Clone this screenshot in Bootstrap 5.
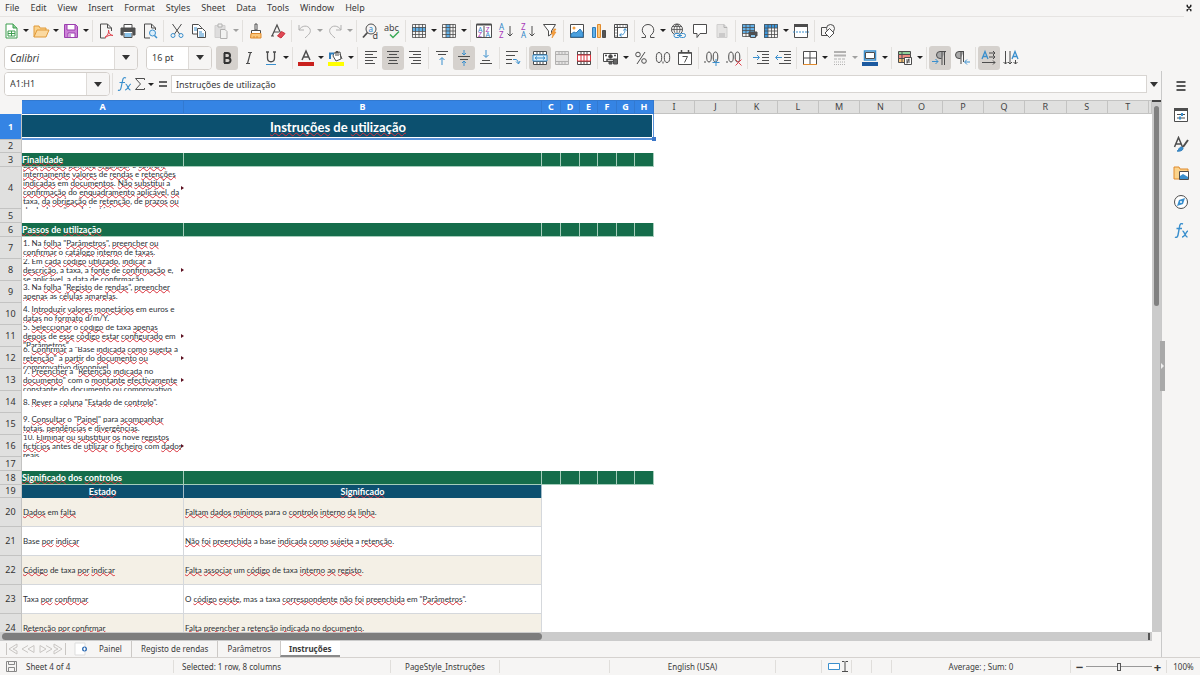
<!DOCTYPE html>
<html lang="pt">
<head>
<meta charset="utf-8">
<meta name="viewport" content="width=device-width, initial-scale=1">
<title>Instruções</title>
<link href="https://cdn.jsdelivr.net/npm/bootstrap@5.3.0/dist/css/bootstrap.min.css" rel="stylesheet">
<style>
:root{--ui:#f6f5f4;--line:#d5d2cf;--ink:#3a3a3a;--sel:#3584e4;--blu:#3a8fcd}
body{background:var(--ui);color:var(--ink);font:9px/14px "Noto Sans","Open Sans",sans-serif;overflow:hidden}
button,input{font:inherit;color:inherit}
svg{display:block;fill:none;stroke:#4d4d4d;stroke-width:1}
a{color:inherit;text-decoration:none}
.menubar{height:17px;border-bottom:1px solid #e6e4e2;margin-right:16px;flex:none}
.menubar a{padding:0 6px 0 5px;line-height:16px}
.closer{top:0;right:6px;width:10px;height:16px}
.tools{height:27px;flex:none}
.tool{width:22px;height:24px;padding:0;border:0;background:none;display:flex;align-items:center;justify-content:center;border-radius:3px;flex:none}
.tool.on{background:#d5d1cd}
.tool svg{width:16px;height:16px;flex:none}
.arrow{width:8px;height:24px;padding:0;border:0;background:none;display:flex;align-items:center;justify-content:center;flex:none}
.arrow::after{content:"";border:3px solid transparent;border-top:3px solid #222;border-bottom:0}
.off{opacity:.4}
.bar{width:1px;height:22px;margin:0 2px;background:#e2e0dd;flex:none}
.combo{height:24px;border:1px solid #d3cfcb;border-radius:4px;background:#fff;overflow:hidden;flex:none}
.combo input{border:0;background:#fff;padding:0 5px;min-width:0;outline:0}
.combo button{width:23px;border:0;border-left:1px solid #dedbd8;background:var(--ui);padding:0;flex:none}
.combo button::after,.drop::after{content:"";display:block;margin:auto;width:8px;border:4px solid transparent;border-top:5px solid #333;border-bottom:0}
.fontbox{width:134px}.sizebox{width:66px}.namebox{width:106px}
.formula{height:29px;flex:none;padding-bottom:3px}
.formula .entry{height:18px;border:1px solid #d8d5d2;background:#fff;padding:0 4px;min-width:0;outline:0}
.drop{width:14px;border:0;background:none;padding:0}
.fx{width:18px}.sum{width:14px}.eq{width:16px}
.sheetwrap{background:#fff;min-height:0}
.grid{table-layout:fixed;width:100%;border-collapse:separate;border-spacing:0;background:#fff;font:8px/9px Lato,"Liberation Sans",sans-serif;color:#2b3036}
.grid th,.grid td{padding:0;overflow:hidden;white-space:nowrap}
.grid thead th{height:14px;background:#e0e0df;border-right:1px solid #c3c3c2;border-bottom:1px solid #c3c3c2;border-top:1px solid #c3c3c2;font:9px/12px "Noto Sans",sans-serif;color:#444;text-align:center}
.grid thead th.hit{background:var(--sel);border-color:#3279d0;color:#fff;font-weight:700}
.grid thead th.corner{background:var(--ui);border-color:var(--ui)}
.grid tbody th{background:#e0e0df;border-right:1px solid #c3c3c2;border-bottom:1px solid #c3c3c2;font:9px/12px "Noto Sans",sans-serif;color:#333;text-align:center}
.grid tbody th.hit{background:var(--sel);color:#fff;font-weight:700}
.grid u{text-decoration:underline wavy #d9303a 1px;text-underline-offset:-1px;text-decoration-skip-ink:none}
.r1 td,.r1 th{height:26px}.r2 th{height:13px}.rs th{height:14px}.rs.cols th{height:13px}.r4 th{height:42px}.rm th{height:22px}.rl th{height:29px}
.grid td.heading{position:relative;overflow:visible;background:#0c506f;color:#fff;text-align:center;font-size:13px;line-height:20px;font-weight:700;box-shadow:inset -1px -2px 0 #5b93da,inset -2px -3px 0 #fff,inset 0 1px 0 #fff}
.heading u{text-underline-offset:0}
.heading i{position:absolute;right:-2px;bottom:-1px;width:4px;height:4px;background:#3a76c8}
.sect td{background:#156d4b;color:#fff;font-weight:700;font-size:9px;border-right:1px solid #a5cdbb;border-bottom:1px solid #a5cdbb;line-height:11px}
.sect td:last-child{background:#fff;border:0}
.cols td{background:#0c506f;color:#fff;font-weight:700;font-size:9px;line-height:11px;text-align:center;border-right:1px solid #a3bcc8}
.cols td:last-child{background:#fff;border:0}
.clip{display:flex;align-items:center;overflow:hidden;height:22px;padding-left:1px}
.clip.tall{height:42px}
.clip>span{flex:1;min-width:0;overflow:hidden}
.clip>b{flex:none;border:2px solid transparent;border-left:3px solid #5c1020;border-right:0}
.rl td{border-right:1px solid #d5d8dc;border-bottom:1px solid #d5d8dc;padding-left:1px}
.rl td:last-child{border:0}
.rl.alt td{background:#f4f0e6}
.rl.alt td:last-child{background:#fff}
.vtrack{width:9px;background:#cbcbcb;padding:4px 2px 0;border-top:2px solid #444}
.vthumb{height:38%;background:#808080;border-radius:3px}
.htrack{height:9px;background:#cbcbcb;padding:1px 2px;margin-right:9px;flex:none}
.hthumb{height:7px;width:47%;background:#7d7d7d;border-radius:4px}
.htrack i{width:2px;background:#555}
.tabs{height:16px;flex:none;font-size:8px}
.tabs a{padding:0 9px;line-height:16px}
.tabs a+a{border-left:1px solid #ccc9c6}
.tabs a.now{background:#fff;font-weight:700;padding:0 8px;border-bottom:2px solid #8a8a8a}
.side{width:39px;border-left:1px solid #c9c9c9}
.side button{width:38px;height:29px;border:0;background:none;padding:0}
.side svg{width:16px;height:16px;margin:auto}
.grip{left:-2px;top:46%;width:5px;height:50px;background:#a9a9a9}
.grip::after{content:"";position:absolute;left:1px;top:22px;border:3px solid transparent;border-left:3px solid #eee;border-right:0}
.status{height:18px;border-top:1px solid var(--line);flex:none;font-size:8px}
.status>div{border-right:1px solid #e0dedb;height:13px;line-height:13px;white-space:nowrap;flex:none}
.status>div:last-child{border:0}
.w22{width:22px}.w152{width:152px}.w217{width:217px}.w92{width:92px}.w110{width:110px}.w166{width:166px}.w46{width:46px}.w30{width:30px}.w33{width:33px}.w20{width:20px}.w179{width:179px}.w96{width:96px}
.status>.grow{flex:1 0 92px}
.zoomer button{border:0;background:none;padding:0;width:12px;font-weight:700;font-size:13px;line-height:12px}
.zoomer input{appearance:none;width:66px;height:10px;background:linear-gradient(#999,#999) center/100% 1px no-repeat}
.zoomer input::-webkit-slider-thumb{appearance:none;width:4px;height:8px;border:1px solid #555;background:#eee}
.t{stroke:none;fill:#444;font-family:"Noto Sans",sans-serif}
.tool svg{overflow:visible}
</style>
</head>
<body class="vh-100 d-flex flex-column">
<nav class="menubar d-flex position-static" aria-label="Menu">
<a href="#">File</a><a href="#">Edit</a><a href="#">View</a><a href="#">Insert</a><a href="#">Format</a><a href="#">Styles</a><a href="#">Sheet</a><a href="#">Data</a><a href="#">Tools</a><a href="#">Window</a><a href="#">Help</a>
<button class="closer position-absolute border-0 bg-transparent p-0" aria-label="Close"><svg width="10" height="16" viewBox="0 0 10 16"><path d="M3 6l4 4M7 6l-4 4M2.500 5.500h1.500M6 5.500h1.500M2.500 10.500H4M6 10.500h1.500" stroke="#222" stroke-width="1.500"/></svg></button>
</nav>

<div class="tools d-flex align-items-center" role="toolbar" aria-label="Standard">
<button class="tool" aria-label="New"><svg viewBox="0 0 16 16"><path d="M3 1h7l4 4v10H3z" fill="#fff" stroke="#3c9d4e"/><path d="M10 1v4h4" fill="#8fd19a" stroke="#3c9d4e"/><path d="M5 8h7v5H5zM5 10.500h7M8.500 8v5" stroke="#3c9d4e"/></svg></button><button class="arrow" aria-label="New options"></button>
<button class="tool" aria-label="Open"><svg viewBox="0 0 16 16"><path d="M1 14V3h5l1 2h6v3" fill="#fbd38c" stroke="#e09a3a"/><path d="M1 14L4 7h12l-3 7z" fill="#fbd9a0" stroke="#e09a3a"/></svg></button><button class="arrow" aria-label="Open options"></button>
<button class="tool" aria-label="Save"><svg viewBox="0 0 16 16"><path d="M1.500 1.500h11l2 2v11h-13z" fill="#cd80d8" stroke="#9b3fae"/><path d="M4 1.500h8V7H4zM5 10h7v4.500H5z" fill="#fff" stroke="#9b3fae"/><path d="M7 11v3" stroke="#9b3fae"/></svg></button><button class="arrow" aria-label="Save options"></button>
<i class="bar"></i>
<button class="tool" aria-label="Export PDF"><svg viewBox="0 0 16 16"><path d="M13.500 8V5l-4-4h-7v14h5M9.500 1v4h4"/><path d="M7 14c3-1 4-5 3.500-7 0 3 2 5.500 4.500 5.500-2-1-6 0-8 2.500" stroke="#e0434f"/></svg></button>
<button class="tool" aria-label="Print"><svg viewBox="0 0 16 16"><path d="M4 5V1.500h8V5" fill="#fff"/><path d="M1 5h14v7H1z" fill="#505050"/><path d="M4 9.500h8v5H4z" fill="#8cc4ea" stroke="#fff"/><path d="M4 10v4.500h8V10"/></svg></button>
<button class="tool" aria-label="Print preview"><svg viewBox="0 0 16 16"><path d="M13.500 7V5l-4-4h-7v14H8M9.500 1v4h4"/><circle cx="10.500" cy="10" r="3" fill="#dceefa" stroke="#3a8fcd"/><path d="M12.500 12.500L15 15" stroke="#3a8fcd" stroke-width="1.500"/></svg></button>
<i class="bar"></i>
<button class="tool" aria-label="Cut"><svg viewBox="0 0 16 16"><path d="M3.500 1l7 10M12.500 1l-7 10"/><circle cx="4" cy="12.500" r="2" stroke="#3a8fcd"/><circle cx="12" cy="12.500" r="2" stroke="#3a8fcd"/></svg></button>
<button class="tool" aria-label="Copy"><svg viewBox="0 0 16 16"><path d="M1.500 1.500h6l3 3V11h-9z" fill="#fff"/><path d="M6.500 5.500h5l3 3v6h-8z" fill="#fff"/><path d="M3 5h3M3 7h3M8 9h3M8 11h5M8 13h5" stroke="#3a8fcd"/></svg></button>
<button class="tool off" aria-label="Paste"><svg viewBox="0 0 16 16"><path d="M2 2.500h10v12H2z" fill="#bbb" stroke="#999"/><path d="M5 1h4v3H5z" fill="#eee"/><path d="M7.500 6.500H12l2 2v7H7.500z" fill="#eee"/></svg></button><button class="arrow off" aria-label="Paste options"></button>
<i class="bar"></i>
<button class="tool" aria-label="Clone formatting"><svg viewBox="0 0 16 16"><path d="M7 1h2v6H7zM3.500 7.500h9v3h-9z" fill="#fff"/><path d="M3 10.500h10v4.500H2.500z" fill="#fbc77c" stroke="#e08a2c"/><path d="M6 13v2M9 13v2" stroke="#e08a2c"/></svg></button>
<button class="tool" aria-label="Clear formatting"><svg viewBox="0 0 16 16"><path d="M2 13L7 2l4 9M4 9h5M1 13h3" stroke-width="1.200"/><path d="M7.500 13l4-4.500 3.500 2-4 4.500z" fill="#e04a56" stroke="#c9303c"/></svg></button>
<i class="bar"></i>
<button class="tool off" aria-label="Undo"><svg viewBox="0 0 16 16"><path d="M2 2v5h5M2 7c3-5 9-5 11-1 1.500 4-2 6-5 9"/></svg></button><button class="arrow off" aria-label="Undo list"></button>
<button class="tool off" aria-label="Redo"><svg viewBox="0 0 16 16"><path d="M14 2v5H9M14 7C11 2 5 2 3 6c-1.500 4 2 6 5 9"/></svg></button><button class="arrow off" aria-label="Redo list"></button>
<i class="bar"></i>
<button class="tool" aria-label="Find and replace"><svg viewBox="0 0 16 16"><circle cx="9" cy="6" r="5"/><path d="M5.500 9.500L1 14.500" stroke-width="1.800"/><text class="t" x="6.500" y="8.500" font-size="8" style="fill:#2f86c8">a</text><text class="t" x="10.500" y="15.500" font-size="9">d</text></svg></button>
<button class="tool" aria-label="Spelling"><svg viewBox="0 0 16 16"><text class="t" x="0" y="7.500" font-size="9">abc</text><path d="M6 11.500l3 3 6-6" stroke="#3cab58" stroke-width="1.500"/></svg></button>
<i class="bar"></i>
<button class="tool" aria-label="Row"><svg viewBox="0 0 16 16"><path d="M1 4h14v4H1z" fill="#63b1e8" stroke="none"/><path d="M1.500 1.500h13v13h-13zM1 4.500h14M1 8.500h14M1 11.500h14M4.500 1v14M8 1v14M11.500 1v14" stroke-width=".8"/></svg></button><button class="arrow" aria-label="Row options"></button>
<button class="tool" aria-label="Column"><svg viewBox="0 0 16 16"><path d="M5 1h4v14H5z" fill="#63b1e8" stroke="none"/><path d="M1.500 1.500h13v13h-13zM1 4.500h14M1 8h14M1 11.500h14M5 1v14M9 1v14M12 1v14" stroke-width=".8"/></svg></button><button class="arrow" aria-label="Column options"></button>
<i class="bar"></i>
<button class="tool" aria-label="Sort"><svg viewBox="0 0 16 16"><path d="M.5 1.500h15v13H.5zM8 3v11" fill="#fff"/><path d="M.5 1.500h15" stroke-width="2"/><g font-size="7"><text class="t" x="2" y="8.500" style="fill:#2f86c8">A</text><text class="t" x="2" y="14" style="fill:#a838b8">Z</text><text class="t" x="9.500" y="8.500" style="fill:#a838b8">Z</text><text class="t" x="9.500" y="14" style="fill:#2f86c8">A</text></g></svg></button>
<button class="tool" aria-label="Sort ascending"><svg viewBox="0 0 16 16"><text class="t" x="1" y="7" font-size="8" style="fill:#2f86c8">A</text><text class="t" x="1" y="15" font-size="8" style="fill:#a838b8">Z</text><path d="M12 3v10M9.500 10.500L12 13l2.500-2.500"/></svg></button>
<button class="tool" aria-label="Sort descending"><svg viewBox="0 0 16 16"><text class="t" x="1" y="7" font-size="8" style="fill:#a838b8">Z</text><text class="t" x="1" y="15" font-size="8" style="fill:#2f86c8">A</text><path d="M12 3v10M9.500 10.500L12 13l2.500-2.500"/></svg></button>
<button class="tool" aria-label="AutoFilter"><svg viewBox="0 0 16 16"><path d="M1.500 1.500h12L9.500 8v3l-3 2V8z" fill="#fff"/><path d="M12 6l-3 5h2l-1 4 4-6h-2l2-3z" fill="#f5a040" stroke="#e78a25" stroke-width=".6"/></svg></button>
<i class="bar"></i>
<button class="tool" aria-label="Image"><svg viewBox="0 0 16 16"><path d="M1.500 1.500h13v13h-13z" fill="#fff"/><circle cx="5" cy="5" r="1.500" fill="#f5a040" stroke="none"/><path d="M2 14v-3l3-2 2 1 4-4 3 4v4z" fill="#4aa0df" stroke="#2f7cba"/></svg></button>
<button class="tool" aria-label="Chart"><svg viewBox="0 0 16 16"><path d="M1.500 4.500h3v10h-3z" fill="#63b1e8" stroke="#2f7cba"/><path d="M6.500 1.500h3v13h-3z" fill="#fbc77c" stroke="#e08a2c"/><path d="M11.500 7.500h3v7h-3z" fill="#555"/></svg></button>
<button class="tool" aria-label="Pivot table"><svg viewBox="0 0 16 16"><path d="M1.500 1.500h13v13h-13zM1 4.500h14M4.500 1v14" fill="#fff"/><path d="M3 3h11M3 6v8" stroke="#999" stroke-dasharray="2 1"/><path d="M7 12c4 0 5-2 5-6M10.500 7.500L12 5.500l1.500 2M8.500 10.500L6.500 12l2 1.500" stroke="#3a8fcd"/></svg></button>
<i class="bar"></i>
<button class="tool" aria-label="Special character"><svg viewBox="0 0 16 16"><path d="M1.500 14.500h4v-2C0 9 2 1.500 8 1.500S16 9 10.500 12.500v2h4"/></svg></button><button class="arrow" aria-label="Recent characters"></button>
<button class="tool" aria-label="Hyperlink"><svg viewBox="0 0 16 16"><circle cx="7" cy="6.500" r="5.500"/><path d="M1.500 6.500h11M2.500 3.500h9M7 1v11M7 1c-4 3-4 8 0 11M7 1c4 3 4 8 0 11" stroke-width=".8"/><rect x="4" y="10.500" width="6" height="4" rx="2" fill="#f6f5f4" stroke="#3a8fcd"/><rect x="9.500" y="10.500" width="6" height="4" rx="2" fill="#f6f5f4" stroke="#3a8fcd"/><path d="M7 12.500h5" stroke="#3a8fcd"/></svg></button>
<button class="tool" aria-label="Comment"><svg viewBox="0 0 16 16"><path d="M1.500 1.500h13v9H8l-3 4v-4H1.500z" fill="#fff"/></svg></button>
<button class="tool off" aria-label="Headers and footers"><svg viewBox="0 0 16 16"><path d="M3 1.500h7l3 3v10H3z" fill="#ccc" stroke="#999"/><path d="M5 11h6M5 13h6M10 1.500v3h3"/></svg></button>
<i class="bar"></i>
<button class="tool" aria-label="Print area"><svg viewBox="0 0 16 16"><path d="M1 1h13v9H1z" fill="#63b1e8" stroke="none"/><path d="M1.500 1.500h12v12h-12zM1 4.500h13M1 7.500h13M1 10.500h13M5 1v13M9 1v13" stroke-width=".8"/><path d="M8 9h8v4H8z" fill="#505050"/><path d="M9.500 11.500h5v3h-5z" fill="#8cc4ea"/></svg></button>
<button class="tool" aria-label="Freeze"><svg viewBox="0 0 16 16"><path d="M1 1h14v4H5v10H1z" fill="#3c97dc" stroke="none"/><path d="M1.500 1.500h13v13h-13zM1 5h14M1 8h14M1 11.500h14M5 1v14M8.500 1v14M11.500 1v14" stroke-width=".8"/></svg></button><button class="arrow" aria-label="Freeze options"></button>
<button class="tool" aria-label="Split window"><svg viewBox="0 0 16 16"><path d="M1.500 1.500h13v13h-13z" fill="#fff"/><path d="M1 2.500h14" stroke-width="3"/><path d="M0 9h16" stroke="#3a8fcd" stroke-dasharray="2 1"/></svg></button>
<i class="bar"></i>
<button class="tool" aria-label="Draw functions"><svg viewBox="0 0 16 16"><path d="M1.500 4.500h8v8h-8z"/><circle cx="10.500" cy="5.500" r="4" fill="#f6f5f4"/><path d="M9.500 5.500l4.500 4.500-4.500 4.500L5 10z" fill="#fff"/></svg></button>
</div>

<div class="tools d-flex align-items-center" role="toolbar" aria-label="Formatting">
<div class="combo fontbox d-flex ms-1"><input class="flex-fill fst-italic" style="font-size:10px" aria-label="Font name" value="Calibri"><button aria-label="Font list"></button></div>
<div class="combo sizebox d-flex ms-2 me-1"><input class="flex-fill" aria-label="Font size" value="16 pt"><button aria-label="Size list"></button></div>
<button class="tool on" aria-label="Bold"><svg viewBox="0 0 16 16"><path d="M5 3h3.500a2.300 2.300 0 010 5H5M5.500 3v10M5 13h4a2.500 2.500 0 000-5H5" stroke="#333" stroke-width="2"/></svg></button>
<button class="tool" aria-label="Italic"><svg viewBox="0 0 16 16"><path d="M7 2.500h4M5 13.500h4M9.500 2.500l-3 11" stroke-width="1.200"/></svg></button>
<button class="tool" aria-label="Underline"><svg viewBox="0 0 16 16"><path d="M3 2h3M10 2h3M4.500 2v6c0 5 7 5 7 0V2" stroke-width="1.300"/><path d="M3 14.500h10" stroke="#3a8fcd"/></svg></button><button class="arrow" aria-label="Underline styles"></button>
<i class="bar"></i>
<button class="tool" aria-label="Font color"><svg viewBox="0 0 16 16"><path d="M4 10l4-9 4 9M5.500 7h5" stroke-width="1.500"/><path d="M0 12h16v4H0z" fill="#c9211e" stroke="none"/></svg></button><button class="arrow" aria-label="Font colors"></button>
<button class="tool" aria-label="Highlighting"><svg viewBox="0 0 16 16"><path d="M6 3l6-1 1 7-5 2-3-5z" fill="#fff"/><path d="M8 6V1.500h2V6M12 4l2 5"/><path d="M2 9V3.500h4" stroke="#2f7cba" stroke-width="2"/><path d="M0 12h16v4H0z" fill="#ff0" stroke="none"/></svg></button><button class="arrow" aria-label="Highlight colors"></button>
<i class="bar"></i>
<button class="tool" aria-label="Align left"><svg viewBox="0 0 16 16"><path d="M2 1.500h12M2 4.500h8M2 7.500h12M2 10.500h8M2 13.500h10"/></svg></button>
<button class="tool on" aria-label="Center"><svg viewBox="0 0 16 16"><path d="M2 1.500h12M4 4.500h8M2 7.500h12M4 10.500h8M3 13.500h10"/></svg></button>
<button class="tool" aria-label="Align right"><svg viewBox="0 0 16 16"><path d="M2 1.500h12M6 4.500h8M2 7.500h12M6 10.500h8M4 13.500h10"/></svg></button>
<i class="bar"></i>
<button class="tool" aria-label="Align top"><svg viewBox="0 0 16 16"><path d="M2 1.500h12M4 4.500h8"/><path d="M8 15V8M5.500 10L8 7.500l2.500 2.500" stroke="#3a8fcd"/></svg></button>
<button class="tool on" aria-label="Center vertically"><svg viewBox="0 0 16 16"><path d="M2 6.500h12M4 9.500h8"/><path d="M8 0v5M6 3l2 2 2-2M8 16v-5M6 13l2-2 2 2" stroke="#3a8fcd"/></svg></button>
<button class="tool" aria-label="Align bottom"><svg viewBox="0 0 16 16"><path d="M4 10.500h8M2 13.500h12"/><path d="M8 0v7M5.500 5L8 7.500 10.500 5" stroke="#3a8fcd"/></svg></button>
<i class="bar"></i>
<button class="tool" aria-label="Wrap text"><svg viewBox="0 0 16 16"><path d="M1 1.500h12M1 5.500h9M1 9.500h6M1 13.500h6"/><path d="M8 9.500h3q2 0 2.500 4M11 11.500l2.500 2.500 1.500-3" stroke="#3a8fcd"/></svg></button>
<i class="bar"></i>
<button class="tool on" aria-label="Merge and center"><svg viewBox="0 0 16 16"><path d="M1.500 1.500h13v13h-13zM1 4.500h14M1 11.500h14M5 1v3.500M8 1v3.500M11 1v3.500M5 11v4M8 11v4M11 11v4" fill="#fff"/><path d="M1 5h14v6H1z" fill="#d9effc" stroke="#3a8fcd"/><path d="M3 8h10M5 6.500L3 8l2 1.500M11 6.500L13 8l-2 1.500" stroke="#3a8fcd"/></svg></button>
<button class="tool off" aria-label="Merge cells"><svg viewBox="0 0 16 16"><path d="M1.500 1.500h13v13h-13zM1 4.500h14M1 11.500h14M5 1v3.500M8 1v3.500M11 1v3.500M5 11v4M8 11v4M11 11v4" fill="#ccc"/></svg></button>
<button class="tool" aria-label="Unmerge cells"><svg viewBox="0 0 16 16"><path d="M1.500 1.500h13v13h-13zM1 4.500h14M1 11.500h14M5 1v3.500M8 1v3.500M11 1v3.500M5 11v4M8 11v4M11 11v4" fill="#fff"/><path d="M1.500 5h13v6h-13zM5 5v6M8 5v6M11 5v6" stroke="#d8343f"/></svg></button>
<i class="bar"></i>
<button class="tool" aria-label="Currency"><svg viewBox="0 0 16 16"><path d="M.5 3.500h14v8H.5z" fill="#fff"/><circle cx="7.500" cy="6.500" r="1.800" fill="#444"/><path d="M4 12V9.500h7V12M2 5.500h2M11 5.500h2" stroke-width="1.500"/><path d="M6 12h3v2H6zM10.500 9h4v5h-4z" fill="#666"/></svg></button><button class="arrow" aria-label="Currency list"></button>
<button class="tool" aria-label="Percent"><svg viewBox="0 0 16 16"><circle cx="5" cy="4.500" r="2.300"/><circle cx="11" cy="11" r="2.300"/><path d="M12 2L4 14"/></svg></button>
<button class="tool" aria-label="Number"><svg viewBox="0 0 16 16"><ellipse cx="4" cy="7.500" rx="2.700" ry="5"/><ellipse cx="12" cy="7.500" rx="2.700" ry="5"/><path d="M8 11.500v2"/></svg></button>
<button class="tool" aria-label="Date"><svg viewBox="0 0 16 16"><path d="M1.500 2.500h13v12h-13z" fill="#fff"/><path d="M1.500 3h13M4.500 0v3M11.500 0v3" stroke-width="1.500"/><path d="M5.500 6.500h5l-3 6"/></svg></button>
<i class="bar"></i>
<button class="tool" aria-label="Add decimal"><svg viewBox="0 0 16 16"><path d="M1 11v2"/><ellipse cx="5" cy="7" rx="2.300" ry="5"/><ellipse cx="11.500" cy="7" rx="2.300" ry="5"/><path d="M12 9v7M8.500 12.500h7" stroke="#3a8fcd"/></svg></button>
<button class="tool" aria-label="Delete decimal"><svg viewBox="0 0 16 16"><path d="M1 11v2"/><ellipse cx="5" cy="7" rx="2.300" ry="5"/><ellipse cx="11.500" cy="7" rx="2.300" ry="5"/><path d="M9.500 9.500l6 6M15.500 9.500l-6 6" stroke="#e0434f"/></svg></button>
<i class="bar"></i>
<button class="tool" aria-label="Increase indent"><svg viewBox="0 0 16 16"><path d="M4 1.500h12M9 4.500h7M9 7.500h7M9 10.500h7M4 13.500h12"/><path d="M0 7.500h6M4 5l2.500 2.500L4 10" stroke="#3a8fcd"/></svg></button>
<button class="tool" aria-label="Decrease indent"><svg viewBox="0 0 16 16"><path d="M4 1.500h12M9 4.500h7M9 7.500h7M9 10.500h7M4 13.500h12"/><path d="M7 7.500H1M3 5L.5 7.500 3 10" stroke="#3a8fcd"/></svg></button>
<i class="bar"></i>
<button class="tool" aria-label="Borders"><svg viewBox="0 0 16 16"><path d="M1.500 1.500h13v13h-13z" fill="#fff"/><path d="M8 1.500v13M1.500 8h13"/><path d="M1 14.500h14" stroke="#e08a2c"/></svg></button><button class="arrow" aria-label="Border list"></button>
<button class="tool off" aria-label="Border style"><svg viewBox="0 0 16 16"><path d="M2 2h12M2 5.500h12" stroke-width="2"/><path d="M2 9h12" stroke-dasharray="3 1"/><path d="M2 12h12M2 14.500h12" stroke-dasharray="1 1"/></svg></button><button class="arrow off" aria-label="Border styles"></button>
<button class="tool" aria-label="Border color"><svg viewBox="0 0 16 16"><path d="M2.500 1h11v9h-11z" fill="#fff" stroke="#3a8fcd" stroke-width="1.500"/><path d="M3.500 2.500h9v6h-9z"/><path d="M0 12h16v4H0z" fill="#1c5aa0" stroke="none"/></svg></button><button class="arrow" aria-label="Border colors"></button>
<i class="bar"></i>
<button class="tool" aria-label="Conditional formatting"><svg viewBox="0 0 16 16"><path d="M1.500 1.500h12v3h-12z" fill="#8fd19a"/><path d="M1.500 4.500h12v4h-12z" fill="#f28b82"/><path d="M1.500 8.500h12v4h-12zM5 1v11" fill="#fbc77c"/><path d="M7.500 7.500h7v7h-7z" fill="#fff"/><path d="M9 10h4M9 12h4M12 8.500l-2 5"/></svg></button><button class="arrow" aria-label="Conditional options"></button>
<i class="bar"></i>
<button class="tool on" aria-label="Left to right"><svg viewBox="0 0 16 16"><path d="M14 1.500H8a3.500 3.500 0 000 7h1.500" fill="#aaa"/><path d="M10 1v14M12.500 1v14"/><path d="M0 11.500h6M3.500 9L6 11.500 3.500 14" stroke="#3a8fcd"/></svg></button>
<button class="tool" aria-label="Right to left"><svg viewBox="0 0 16 16"><path d="M10 1.500H5a3.500 3.500 0 000 7h1.500" fill="#aaa"/><path d="M7 1v13M9.500 1v11"/><path d="M16 12h-5M13 9.500L10.500 12l2.500 2.500" stroke="#3a8fcd"/></svg></button>
<i class="bar"></i>
<button class="tool on" aria-label="Horizontal text"><svg viewBox="0 0 16 16"><path d="M1 9l3-7.500L7 9M2 6.500h4" stroke="#3a8fcd" stroke-width="1.300"/><path d="M8 3h6M8 7h6M1 12.500h13M12 1l2 2-2 2M12 5l2 2-2 2M12 10.500l2 2-2 2"/></svg></button>
<button class="tool" aria-label="Vertical text"><svg viewBox="0 0 16 16"><path d="M9 9l3-7.500L15 9M10 6.500h4" stroke="#3a8fcd" stroke-width="1.300"/><path d="M2.500 1v13M7 1v13M12.500 10v4M.5 12l2 2 2-2M5 12l2 2 2-2M10.500 12l2 2 2-2"/></svg></button>
</div>

<div class="d-flex flex-fill" style="min-height:0">
<main class="d-flex flex-column flex-fill" style="min-width:0">
<div class="formula d-flex align-items-center">
<div class="combo namebox d-flex ms-1"><input class="flex-fill" aria-label="Name box" value="A1:H1"><button aria-label="Names"></button></div>
<i class="bar"></i>
<button class="tool fx" aria-label="Function wizard"><svg viewBox="0 0 16 16" style="stroke:#3a8fcd"><path d="M10 2c-2-1-3 0-3.300 2L5 12c-.4 2-1.500 3-3 2M3.500 6.500H9M9.500 8c2 0 2.500 6 5 6M15 8c-2 0-3 6-6 6" stroke-width="1.200"/></svg></button>
<button class="tool sum" aria-label="Sum"><svg viewBox="0 0 16 16"><path d="M12.500 4V2.500h-9L8.500 8l-5 5.500h9V12"/></svg></button><button class="arrow" aria-label="Functions"></button>
<button class="tool eq" aria-label="Formula"><svg viewBox="0 0 16 16"><path d="M4 6h8M4 10h8" stroke="#333" stroke-width="1.500"/></svg></button>
<input class="entry flex-fill" aria-label="Formula input" value="Instruções de utilização"><button class="drop" aria-label="Expand formula bar"></button>
</div>
<div class="sheetwrap d-flex flex-fill">
<div class="flex-fill overflow-hidden">
<table class="grid">
<colgroup><col style="width:22px"><col style="width:162px"><col style="width:358px"><col style="width:19px"><col style="width:19px"><col style="width:18px"><col style="width:19px"><col style="width:18px"><col style="width:19px"><col span="12"><col style="width:3px"></colgroup>
<thead><tr><th class="corner"></th><th class="hit">A</th><th class="hit">B</th><th class="hit">C</th><th class="hit">D</th><th class="hit">E</th><th class="hit">F</th><th class="hit">G</th><th class="hit">H</th><th>I</th><th>J</th><th>K</th><th>L</th><th>M</th><th>N</th><th>O</th><th>P</th><th>Q</th><th>R</th><th>S</th><th>T</th><th></th></tr></thead>
<tbody>
<tr class="r1"><th class="hit">1</th><td class="heading" colspan="8"><u>Instruções</u> de <u>utilização</u><i></i></td><td colspan="13"></td></tr>
<tr class="r2"><th>2</th><td colspan="21"></td></tr>
<tr class="rs sect"><th>3</th><td><u>Finalidade</u></td><td></td><td></td><td></td><td></td><td></td><td></td><td></td><td colspan="13"></td></tr>
<tr class="r4"><th>4</th><td><div class="clip tall"><span><u>Este</u> <u>modelo</u> <u>permite</u> <u>organizar</u> e <u>conferir</u><br><u>internamente</u> <u>valores</u> de <u>rendas</u> e <u>retenções</u><br><u>indicadas</u> em <u>documentos</u>. <u>Não</u> <u>substitui</u> a<br><u>confirmação</u> do <u>enquadramento</u> <u>aplicável</u>, <u>da</u><br>taxa, <u>da</u> <u>obrigação</u> de <u>retenção</u>, de <u>prazos</u> <u>ou</u><br>de declarações obrigatórias.</span><b></b></div></td><td colspan="20"></td></tr>
<tr class="rs"><th>5</th><td colspan="21"></td></tr>
<tr class="rs sect"><th>6</th><td><u>Passos</u> de <u>utilização</u></td><td></td><td></td><td></td><td></td><td></td><td></td><td></td><td colspan="13"></td></tr>
<tr class="rm"><th>7</th><td><div class="clip"><span>1. Na <u>folha</u> "<u>Parâmetros</u>", <u>preencher</u> <u>ou</u><br><u>confirmar</u> o <u>catálogo</u> <u>interno</u> de <u>taxas</u>.</span></div></td><td colspan="20"></td></tr>
<tr class="rm"><th>8</th><td><div class="clip"><span>2. Em <u>cada</u> <u>código</u> <u>utilizado</u>, <u>indicar</u> a<br><u>descrição</u>, a taxa, a <u>fonte</u> de <u>confirmação</u> e,<br>se <u>aplicável</u>, a data de <u>confirmação</u>.</span><b></b></div></td><td colspan="20"></td></tr>
<tr class="rm"><th>9</th><td><div class="clip"><span>3. Na <u>folha</u> "<u>Registo</u> de <u>rendas</u>", <u>preencher</u><br><u>apenas</u> as <u>células</u> <u>amarelas</u>.</span></div></td><td colspan="20"></td></tr>
<tr class="rm"><th>10</th><td><div class="clip"><span>4. <u>Introduzir</u> <u>valores</u> <u>monetários</u> em euros e<br><u>datas</u> no <u>formato</u> d/m/Y.</span></div></td><td colspan="20"></td></tr>
<tr class="rm"><th>11</th><td><div class="clip"><span>5. <u>Seleccionar</u> o <u>código</u> de taxa <u>apenas</u><br><u>depois</u> de <u>esse</u> <u>código</u> <u>estar</u> <u>configurado</u> em<br>"<u>Parâmetros</u>".</span><b></b></div></td><td colspan="20"></td></tr>
<tr class="rm"><th>12</th><td><div class="clip"><span>6. <u>Confirmar</u> a "Base <u>indicada</u> <u>como</u> <u>sujeita</u> a<br><u>retenção</u>" a <u>partir</u> do <u>documento</u> <u>ou</u><br><u>comprovativo</u> <u>disponível</u>.</span><b></b></div></td><td colspan="20"></td></tr>
<tr class="rm"><th>13</th><td><div class="clip"><span>7. <u>Preencher</u> a "<u>Retenção</u> <u>indicada</u> no<br><u>documento</u>" com o <u>montante</u> <u>efectivamente</u><br><u>constante</u> do <u>documento</u> <u>ou</u> <u>comprovativo</u>.</span><b></b></div></td><td colspan="20"></td></tr>
<tr class="rm"><th>14</th><td><div class="clip"><span>8. <u>Rever</u> a <u>coluna</u> "<u>Estado</u> de <u>controlo</u>".</span></div></td><td colspan="20"></td></tr>
<tr class="rm"><th>15</th><td><div class="clip"><span>9. <u>Consultar</u> o "<u>Painel</u>" para <u>acompanhar</u><br><u>totais</u>, <u>pendências</u> e <u>divergências</u>.</span></div></td><td colspan="20"></td></tr>
<tr class="rm"><th>16</th><td><div class="clip"><span>10. <u>Eliminar</u> <u>ou</u> <u>substituir</u> <u>os</u> nove <u>registos</u><br><u>fictícios</u> antes de <u>utilizar</u> o <u>ficheiro</u> com <u>dados</u><br><u>reais</u>.</span><b></b></div></td><td colspan="20"></td></tr>
<tr class="rs"><th>17</th><td colspan="21"></td></tr>
<tr class="rs sect"><th>18</th><td><u>Significado</u> dos <u>controlos</u></td><td></td><td></td><td></td><td></td><td></td><td></td><td></td><td colspan="13"></td></tr>
<tr class="rs cols"><th>19</th><td><u>Estado</u></td><td><u>Significado</u></td><td colspan="19"></td></tr>
<tr class="rl alt"><th>20</th><td><u>Dados</u> em <u>falta</u></td><td><u>Faltam</u> <u>dados</u> <u>mínimos</u> para o <u>controlo</u> <u>interno</u> <u>da</u> <u>linha</u>.</td><td colspan="19"></td></tr>
<tr class="rl"><th>21</th><td>Base <u>por</u> <u>indicar</u></td><td><u>Não</u> <u>foi</u> <u>preenchida</u> a base <u>indicada</u> <u>como</u> <u>sujeita</u> a <u>retenção</u>.</td><td colspan="19"></td></tr>
<tr class="rl alt"><th>22</th><td><u>Código</u> de taxa <u>por</u> <u>indicar</u></td><td><u>Falta</u> <u>associar</u> um <u>código</u> de taxa <u>interno</u> <u>ao</u> <u>registo</u>.</td><td colspan="19"></td></tr>
<tr class="rl"><th>23</th><td>Taxa <u>por</u> <u>confirmar</u></td><td>O <u>código</u> <u>existe</u>, mas a taxa <u>correspondente</u> <u>não</u> <u>foi</u> <u>preenchida</u> em "<u>Parâmetros</u>".</td><td colspan="19"></td></tr>
<tr class="rl alt"><th>24</th><td><u>Retenção</u> <u>por</u> <u>confirmar</u></td><td><u>Falta</u> <u>preencher</u> a <u>retenção</u> <u>indicada</u> no <u>documento</u>.</td><td colspan="19"></td></tr>
</tbody></table>
</div>
<div class="vtrack flex-shrink-0"><div class="vthumb"></div></div>
</div>
<div class="htrack d-flex justify-content-between"><div class="hthumb"></div><i></i></div>
<div class="tabs d-flex">
<button class="border-0 bg-transparent p-0 ps-1" aria-label="Scroll sheets"><svg width="64" height="14" viewBox="0 0 64 14" style="stroke:#c9c6c3"><path d="M2.500 1v12M13 2L5 7l8 5V9l-4-2 4-2zM24 3.500L18 7l6 3.500M30 3.500L24 7l6 3.500V3.500M36 3.500L42 7l-6 3.500zM42 3.500L48 7l-6 3.500M50 2l8 5-8 5V9l4-2-4-2zM61.500 1v12"/></svg></button>
<button class="border-0 bg-transparent p-0 ps-1" aria-label="Add sheet"><svg width="18" height="14" viewBox="0 0 18 14"><path d="M3 1h10v12H3z" fill="#fff" stroke="#ddd"/><circle cx="12.500" cy="7" r="2.500" fill="#2f6db5" stroke="none"/><path d="M11 7h3M12.500 5.500v3" stroke="#fff"/></svg></button>
<nav class="d-flex" aria-label="Sheets"><a href="#">Painel</a><a href="#">Registo de rendas</a><a href="#">Parâmetros</a><a href="#" class="now">Instruções</a></nav>
</div>
</main>
<aside class="side d-flex flex-column position-relative flex-shrink-0">
<button aria-label="Sidebar settings"><svg viewBox="0 0 16 16"><path d="M3.500 4h9M3.500 8h9M3.500 12h9" stroke="#222" stroke-width="1.600"/></svg></button>
<button aria-label="Properties"><svg viewBox="0 0 16 16"><path d="M1.500 1.500h13v13h-13z" fill="#fff"/><path d="M1 2.500h14" stroke-width="3"/><path d="M4 7.500h8M4 11h8"/><path d="M9 6v3M7 9.500v3" stroke="#3a8fcd" stroke-width="2"/></svg></button>
<button aria-label="Styles"><svg viewBox="0 0 16 16"><path d="M1.500 11l4-9.500 4 9.500M3 8h5" stroke-width="1.500"/><path d="M15 4l-5 7" stroke-width="2"/><path d="M4 15c2 0 1-4 5-4 3 2-1 5-5 4z" fill="#3a8fcd" stroke="#2f7cba"/></svg></button>
<button aria-label="Gallery"><svg viewBox="0 0 16 16"><path d="M1 14V2h5l1 2h8v10z" fill="#fbd38c" stroke="#e08a2c"/><path d="M6.500 6.500h9v8h-9z" fill="#fff"/><path d="M7 14v-3l3-2 5 3v2z" fill="#3a8fcd" stroke="none"/></svg></button>
<button aria-label="Navigator"><svg viewBox="0 0 16 16"><circle cx="8" cy="8" r="6.500" fill="#fff"/><path d="M12 4l-2 6-6 2 2-6z" fill="#3a8fcd" stroke="none"/><circle cx="8" cy="8" r="1" fill="#fff" stroke="none"/></svg></button>
<button aria-label="Functions"><svg viewBox="0 0 16 16" style="stroke:#3a8fcd"><path d="M10 1C8 0 7 1 6.700 3L5 12c-.4 2-1.500 3-3 2M3.500 5.500H9M9.500 8c2 0 2.500 6 5 6M15 8c-2 0-3 6-6 6" stroke-width="1.400"/></svg></button>
<i class="grip position-absolute"></i>
</aside>
</div>

<footer class="status d-flex align-items-center">
<div class="w22 border-0"><svg class="ms-1" width="14" height="13" viewBox="0 0 14 13" style="stroke:#888"><path d="M2.500 1.500h10v10h-10zM4.500 1.500v3h6v-3M4.500 11.500v-4h6v4"/></svg></div>
<div class="w152 ps-1">Sheet 4 of 4</div>
<div class="w217 ps-2">Selected: 1 row, 8 columns</div>
<div class="grow text-center">PageStyle_Instruções</div>
<div class="w110"></div>
<div class="w166 text-center">English (USA)</div>
<div class="w46"></div>
<div class="w30 d-flex align-items-center"><svg width="26" height="13" viewBox="0 0 26 13"><path d="M6.500 3.500h11v6h-11z" stroke="#3a8fcd" fill="#fff"/><path d="M20 1.500h2.500M23.500 1.500H26M23 2v9M20 11.500h6"/></svg></div>
<div class="w20"></div><div class="w20"></div>
<div class="w179 text-center">Average: ; Sum: 0</div>
<div class="w96 zoomer d-flex align-items-center justify-content-center"><button aria-label="Zoom out">−</button><input type="range" aria-label="Zoom" min="0" max="100" value="50"><button aria-label="Zoom in">+</button></div>
<div class="w33 text-center">100%</div>
</footer>
<script src="https://cdn.jsdelivr.net/npm/bootstrap@5.3.0/dist/js/bootstrap.bundle.min.js"></script>
</body>
</html>
